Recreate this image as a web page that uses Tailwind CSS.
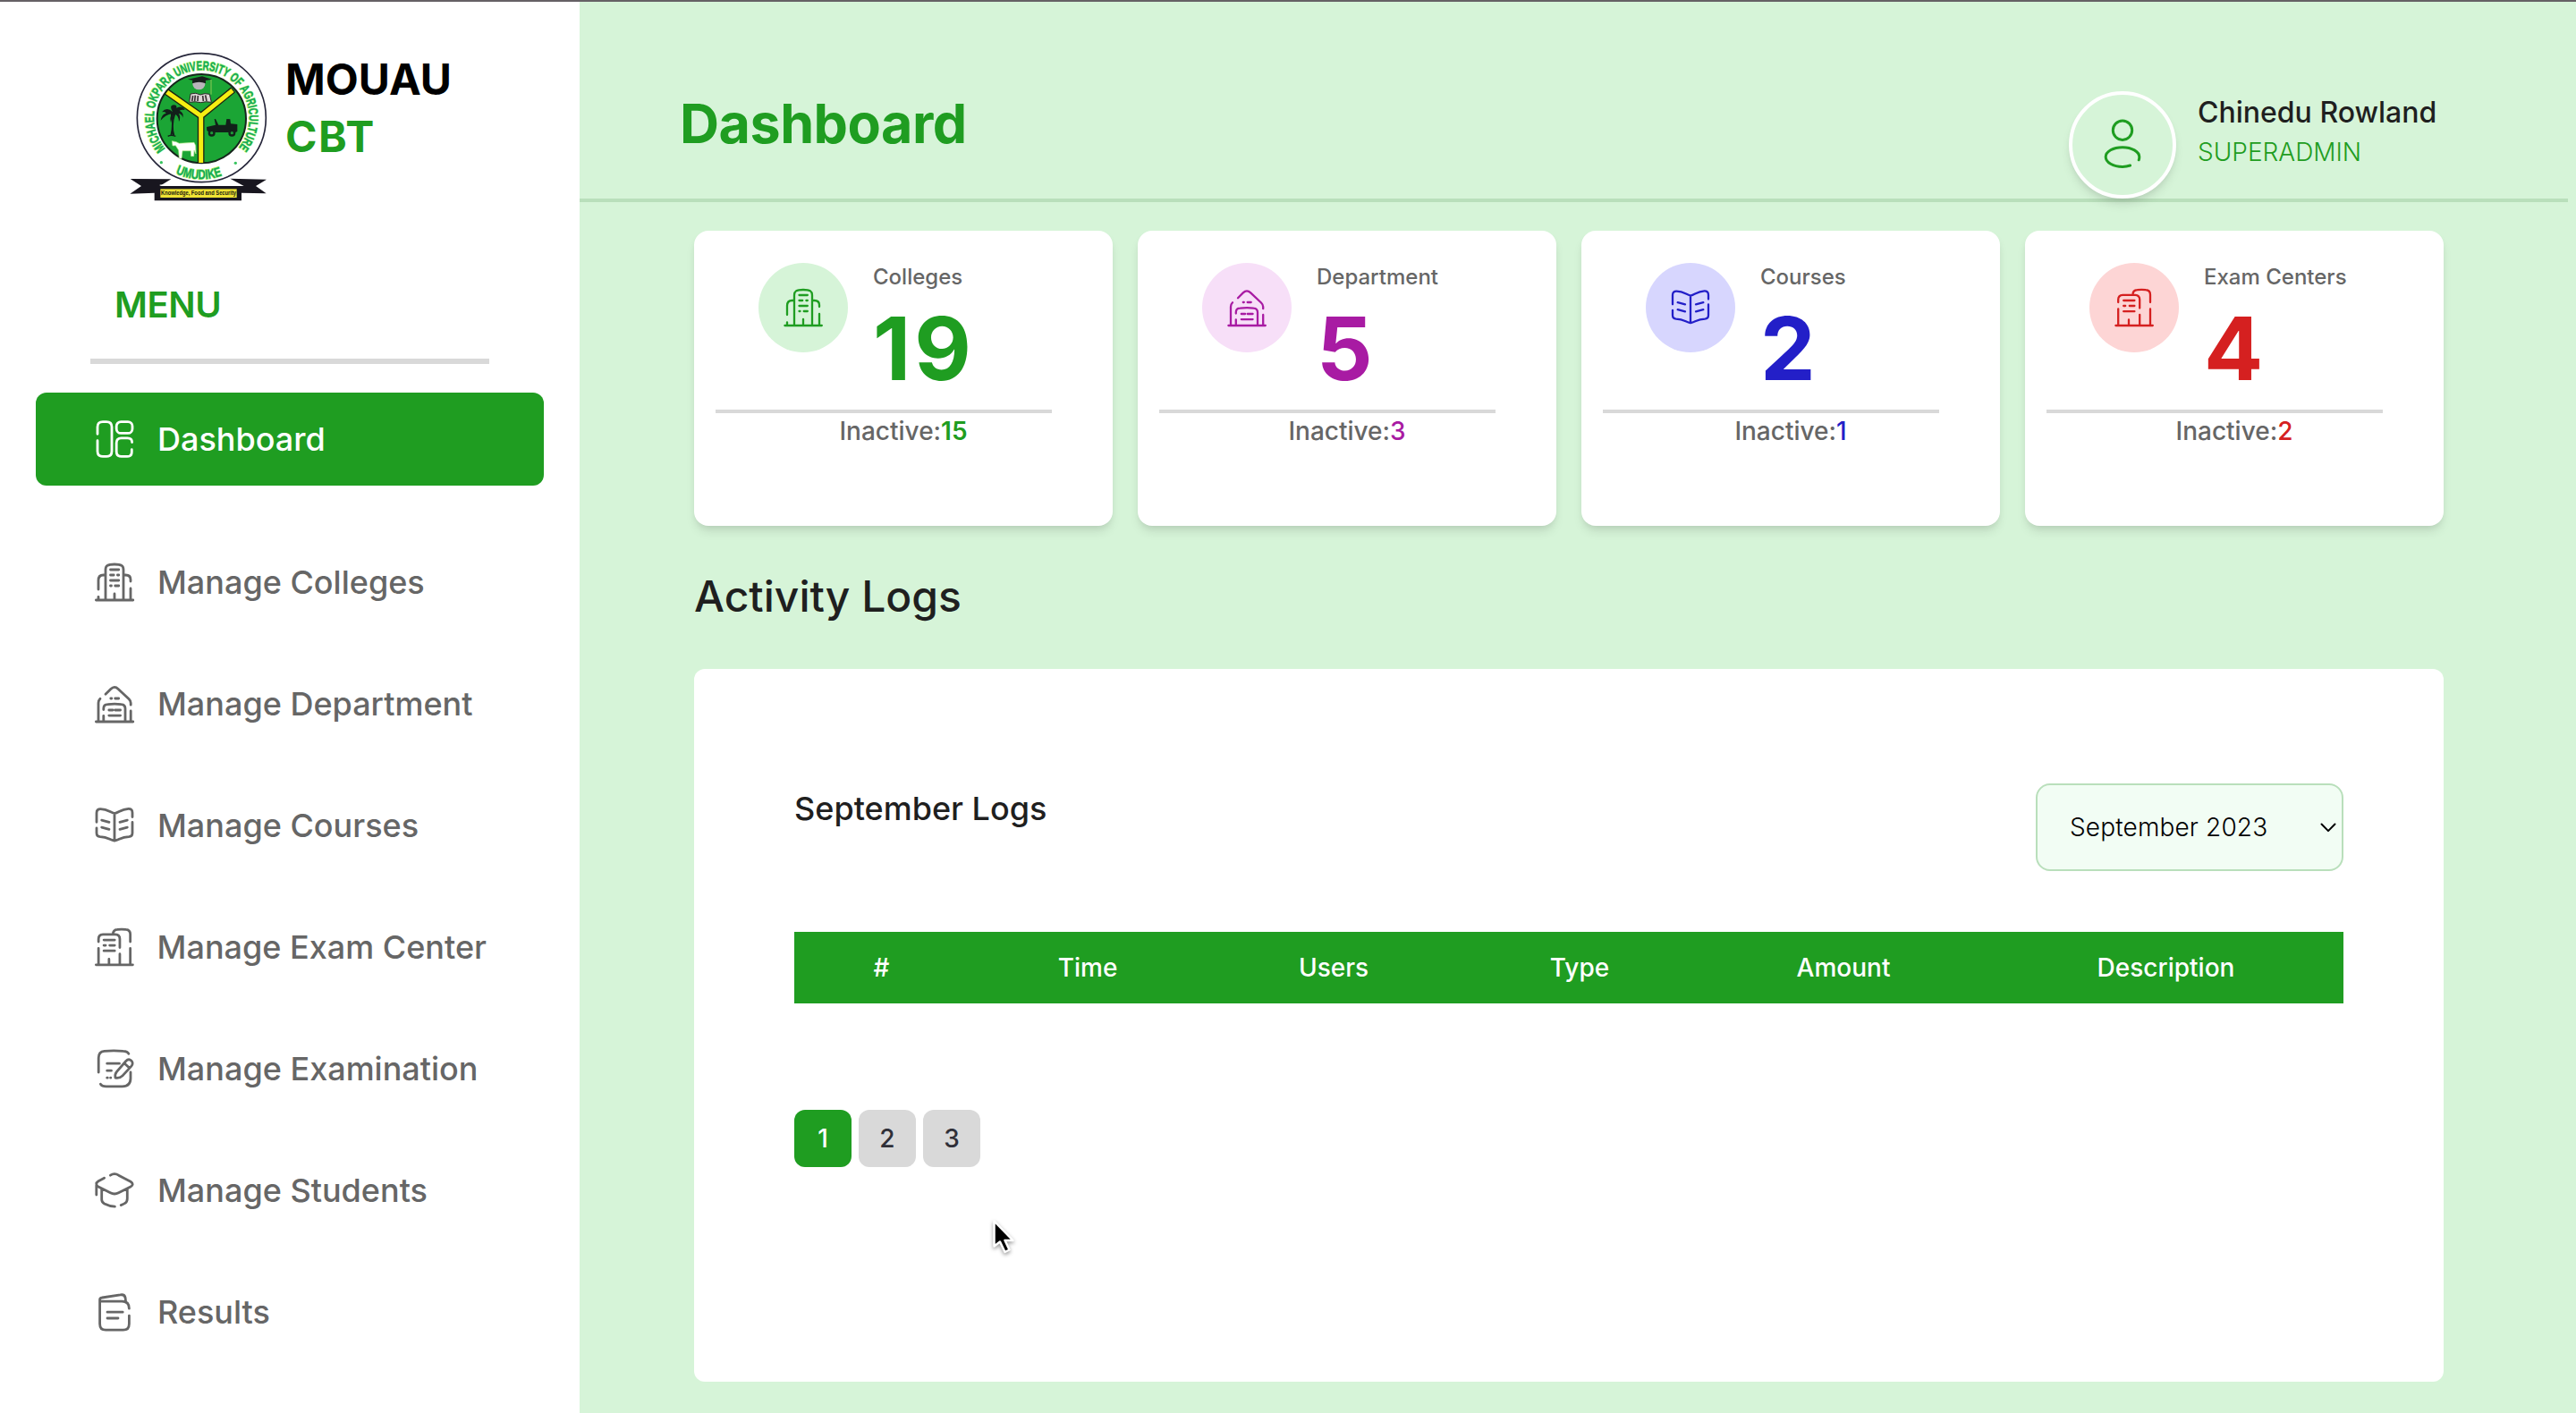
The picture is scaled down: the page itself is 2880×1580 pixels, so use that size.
<!DOCTYPE html>
<html lang="en">
<head>
<meta charset="utf-8">
<title>MOUAU CBT - Dashboard</title>
<script src="https://cdn.jsdelivr.net/npm/@tailwindcss/browser@4"></script>
</head>
<body class="font-['Inter',sans-serif] bg-white">
<!-- icon sprite -->
<svg class="hidden" xmlns="http://www.w3.org/2000/svg">
  <symbol id="i-dashboard" viewBox="0 0 48 48"><path d="M5 18.3V10.5C5 6.3 7 4.6 11 4.6h4c4 0 6 1.700 6 5.900v27c0 4.200-2 5.900-6 5.900h-4c-4 0-6-1.700-6-5.900V25.700"/><rect x="26.200" y="4.600" width="17.800" height="12.800" rx="5"/><path d="M43.600 27.600c0-3.400-1.800-4.700-5-4.700h-7c-3.600 0-5.400 1.700-5.400 5.400v9.800c0 3.600 1.800 5.300 5.400 5.300h6.600c3.500 0 5.100-1.600 5.100-5v-2.700"/></symbol>
  <symbol id="i-college" viewBox="0 0 48 48"><path d="M3.400 44h41.400M14 44V10c0-4.300 2-6 10-6s10 1.700 10 6v34M6 32V22c0-4 2-6 5.500-6H14M6 40.300V44M34 16h2.500c3.500 0 5.500 1.700 5.500 5v2M42 31v13M19.500 10h9.300M19.500 16h3.700M27.400 16h1.400M19.500 22h9.300M19.500 28h1M24.700 28h4.100M24 37v7"/></symbol>
  <symbol id="i-department" viewBox="0 0 48 48"><path d="M3.400 44h41.400M14 13.200l5.800-5.800c2.800-2.700 5.600-2.700 8.400 0L40 18.500c1.500 1.500 2.200 2.700 2.200 4.500v2.200M42.200 32v12M8 18.200C6.500 19.700 6 21 6 23v21M11.800 30.500v-1.300c0-3 1.700-4.600 4.600-4.600 5-.6 10.600-.6 15.200 0 2.900.2 4.400 1.700 4.400 4.700V44M11.800 37.300V44M19.800 18h1M24.700 18h4M17.800 31h4.300M24.700 31h5.900M17.800 37.100h12.800"/></symbol>
  <symbol id="i-course" viewBox="0 0 48 48"><path d="M4 20.300V10c0-3 1.700-4.500 4.500-4.400C16.500 5.800 19 9.400 24 10.600 29 9.400 31.500 5.800 39.500 5.300c2.800-.1 4.500 1.300 4.500 4.400v4.800M44 20.500v12c0 2.300-1.500 3.900-4 4.100C31.500 37 29.500 40 24 41.200 18.500 40 16.500 37 8 36.600c-2.500-.2-4-1.800-4-4.100v-5.700M24 10.600v30.600M9.700 18.200l8.300 2.100M9.700 26.200l8.300 2.100M38.300 18.200L30 20.300M38.300 26.200L30 28.300"/></symbol>
  <symbol id="i-exam" viewBox="0 0 48 48"><path d="M3.400 44h41.400M6.200 18v-3c0-3.400 1.500-5 5-5.200h14c3.400.2 5 1.800 5 5.200v9.500M6.200 25.300V44M30.200 31.800V44M18 37.500V44M22.500 9.500C22.500 6 24 4.500 27.500 4.200c3-.4 6.500-.4 9.500 0 3.500.3 5 1.800 5 5.300v8.500M42 25.500V44M12.200 16h12.200M12.200 22h2M18.800 22h5.600M12.200 28.200h12.200"/></symbol>
  <symbol id="i-examination" viewBox="0 0 48 48"><path d="M6.200 28V12c0-4.500 2-7.200 6.500-7.600 7-.7 14-.7 21 0 3.400.2 5.200.9 6.200 2.900M8.400 41.200c1.200 2 3.300 2.600 6.400 2.600h18c6 0 9.200-2.800 9.200-9v-7M15.700 18.200h13.800M15.700 26.200h4.800M15.700 34.200h.6M19.600 34.200h.2M25 34.200c-.7-3-.1-5 1.500-6.900L36.800 15.500c1.900-2 4.300-2 6-.5s1.900 4.200.1 6.100L33 31.900c-2 2.100-5 2.800-8 2.300zM34.800 17.800l6 5.500"/></symbol>
  <symbol id="i-student" viewBox="0 0 48 48"><path d="M19.400 7.200c3-2 6.200-2 9.200 0L42 14.300c3 1.900 3 3.900 0 5.700L28.600 26.800c-3 1.600-6.200 1.600-9.200 0L6 20c-3-1.800-3-4.400 0-6.300l6.600-3.500M3.800 18v11M9.700 22.500v11.700c0 2.500.7 3.500 3 4.800 4 2 7.500 3 11.700 3.200M38.300 22.500v10.700c0 2.500-.5 3.800-2.500 5.200-1.300.9-2.800 1.500-4.600 2.200"/></symbol>
  <symbol id="i-result" viewBox="0 0 48 48"><path d="M7.600 10v27.200c0 4.800 2 7 6.600 7h19.500c4.600 0 6.700-2.200 6.700-7v-9M7.600 12.200h24.800c5 0 8 2.800 8 8M7.600 12V10.500c0-1.700.8-2.300 2.500-2.500l20.400-3.100c3.200-.6 5 .3 5.600 3.200l.6 5.300M16 24.200h17.200M16 31h12"/></symbol>
</svg>

<div class="w-[2880px] h-[1580px] flex flex-col overflow-hidden">
  <div class="h-[2px] bg-[#666165] shrink-0"></div>
  <div class="flex flex-1 min-h-0">

    <!-- sidebar -->
    <aside class="w-[648px] shrink-0 bg-white flex flex-col">
      <div class="flex pl-[130px] pt-[43px] h-[315px]">
        <svg class="w-[187px] h-[190px] shrink-0" viewBox="0 0 561 570" xmlns="http://www.w3.org/2000/svg">
          <defs>
            <path id="arcTop" d="M164.300 363.900A160 160 0 1 1 407.700 363.900"/>
            <path id="arcBottom" d="M199 447A206 206 0 0 0 362 451"/>
          </defs>
          <circle cx="286" cy="260" r="216" fill="#fff" stroke="#26263a" stroke-width="5"/>
          <circle cx="286" cy="263" r="149" fill="#1ba535" stroke="#16261c" stroke-width="6"/>
          <path d="M168 172L284 254L392 166M284 250V412" fill="none" stroke="#1d2410" stroke-width="23"/>
          <path d="M170 174L284 254L390 168M284 250V411" fill="none" stroke="#f6ee12" stroke-width="15"/>
          <!-- mortarboard, globe and book -->
          <ellipse cx="277" cy="147" rx="21" ry="19" fill="#b9b4bb"/>
          <path d="M240 131l48-10 33 10-43 8z" fill="#181e1c"/><path d="M255 136q22-9 45 0v9q-22-9-45 0z" fill="#181e1c"/>
          <path d="M318 132v50" stroke="#8ecb56" stroke-width="3"/>
          <path d="M249 180q18-6 33 3 15-7 31-2l6 27q-18-4-36 1-18-5-38-1z" fill="#ddd6d6" stroke="#2b2526" stroke-width="3"/>
          <path d="M257 186l-3 18M265 185l-2 19M274 186l-1 18M290 186l2 18M299 184l4 20" stroke="#3b3335" stroke-width="5"/>
          <!-- palm tree -->
          <path d="M185 244c6 28 6 50-1 76M196 246c-8 24-11 48-3 74" fill="none" stroke="#12201a" stroke-width="6"/>
          <path d="M189 240q-20-18-36 1 12-3 14 4-14 2-18 24 16-19 38-23-9 12-4 30 4-19 12-28 14 2 15 25 8-15-1-27 12 2 14 14 5-17-11-24 6-4 18-2-8-16-28-7 2-10-10-10-16 2-3 23z" fill="#12201a"/>
          <path d="M173 322q10-6 26 0" stroke="#12201a" stroke-width="4" fill="none"/>
          <!-- cow -->
          <path d="M187 338l14 3 10 5 50-3 5 10 1 28-6-12-1 20-9 0-1-18-28 0-3 26-8-1-2-27-10-16-10 1z" fill="#fff" stroke="#b6ee8e" stroke-width="2"/>
          <!-- jeep -->
          <path d="M303 291l30-7-4-20h4l10 20 24 0 3-20 12 1 2 15 22 2v24l-6 3H312l-8-6z" fill="#12201a"/>
          <circle cx="320" cy="311" r="12" fill="#12201a"/><circle cx="388" cy="311" r="12" fill="#12201a"/>
          <circle cx="320" cy="311" r="5" fill="#1e9a38"/><circle cx="388" cy="311" r="5" fill="#1e9a38"/>
          <g font-family="'Liberation Sans',sans-serif" font-weight="700" fill="#12a85c" stroke="#9cf05a" stroke-width="4" paint-order="stroke">
            <text font-size="43"><textPath href="#arcTop" textLength="724" lengthAdjust="spacingAndGlyphs">MICHAEL OKPARA UNIVERSITY OF AGRICULTURE</textPath></text>
            <text font-size="45"><textPath href="#arcBottom" textLength="160" lengthAdjust="spacingAndGlyphs">UMUDIKE</textPath></text>
          </g>
          <circle cx="151" cy="410" r="5" fill="#36c45e"/><circle cx="400" cy="412" r="5" fill="#36c45e"/>
          <!-- ribbon -->
          <path d="M47 465L184 466L146 489H428L382 464L504 467L468 489L503 514L420 512V538H128V512L46 515L84 489z" fill="#18161f"/>
          <path d="M146 486h256" stroke="#fff" stroke-width="3"/>
          <rect x="148" y="499" width="256" height="29" fill="#efe334"/>
          <text x="150" y="519" font-family="'Liberation Sans',sans-serif" font-weight="700" font-size="19" textLength="252" lengthAdjust="spacingAndGlyphs" fill="#1c1a10">Knowledge, Food and Security</text>
        </svg>
        <div class="pt-[12px] pl-[2px] text-[48px] leading-[64px] font-bold text-black">
          <div>MOUAU</div>
          <div class="tracking-[1.4px] text-[#1f9d21]">CBT</div>
        </div>
      </div>
      <div class="pl-[128px] text-[40px] leading-[48px] font-semibold tracking-[-0.4px] text-[#1f9d21]">MENU</div>
      <div class="mt-[36px] ml-[101px] w-[446px] h-[6px] bg-[#d9d9d9]"></div>

      <nav class="mt-[32px] px-[40px] flex flex-col text-[36px] leading-[48px] font-medium text-[#666]">
        <a class="flex items-center gap-[24px] h-[104px] px-[64px] rounded-[12px] bg-[#1f9d21] text-white mb-[56px]"><svg class="w-[48px] h-[48px] fill-none stroke-current stroke-[2.8] [stroke-linecap:round] [stroke-linejoin:round]"><use href="#i-dashboard"/></svg>Dashboard</a>
        <a class="flex items-center gap-[24px] h-[104px] px-[64px] mb-[32px]"><svg class="w-[48px] h-[48px] fill-none stroke-current stroke-[2.8] [stroke-linecap:round] [stroke-linejoin:round]"><use href="#i-college"/></svg>Manage Colleges</a>
        <a class="flex items-center gap-[24px] h-[104px] px-[64px] mb-[32px]"><svg class="w-[48px] h-[48px] fill-none stroke-current stroke-[2.8] [stroke-linecap:round] [stroke-linejoin:round]"><use href="#i-department"/></svg>Manage Department</a>
        <a class="flex items-center gap-[24px] h-[104px] px-[64px] mb-[32px]"><svg class="w-[48px] h-[48px] fill-none stroke-current stroke-[2.8] [stroke-linecap:round] [stroke-linejoin:round]"><use href="#i-course"/></svg>Manage Courses</a>
        <a class="flex items-center gap-[24px] h-[104px] px-[64px] mb-[32px] whitespace-nowrap"><svg class="w-[48px] h-[48px] fill-none stroke-current stroke-[2.8] [stroke-linecap:round] [stroke-linejoin:round]"><use href="#i-exam"/></svg>Manage Exam Center</a>
        <a class="flex items-center gap-[24px] h-[104px] px-[64px] mb-[32px]"><svg class="w-[48px] h-[48px] fill-none stroke-current stroke-[2.8] [stroke-linecap:round] [stroke-linejoin:round]"><use href="#i-examination"/></svg>Manage Examination</a>
        <a class="flex items-center gap-[24px] h-[104px] px-[64px] mb-[32px]"><svg class="w-[48px] h-[48px] fill-none stroke-current stroke-[2.8] [stroke-linecap:round] [stroke-linejoin:round]"><use href="#i-student"/></svg>Manage Students</a>
        <a class="flex items-center gap-[24px] h-[104px] px-[64px]"><svg class="w-[48px] h-[48px] fill-none stroke-current stroke-[2.8] [stroke-linecap:round] [stroke-linejoin:round]"><use href="#i-result"/></svg>Results</a>
      </nav>
    </aside>

    <!-- main -->
    <main class="flex-1 bg-[#d6f4d8] flex flex-col">
      <header class="w-[2223px] h-[224px] border-b-[4px] border-[#b9dfbb] flex justify-between pl-[112px] pr-[148px]">
        <h1 class="pt-[96px] text-[61px] leading-[80px] font-bold tracking-[-0.5px] text-[#1f9d21]">Dashboard</h1>
        <div class="flex pt-[100px] w-[410px]">
          <div class="w-[120px] h-[120px] shrink-0 rounded-full border-[4px] border-white bg-[#d6f4d8] shadow-[0_8px_12px_-2px_rgba(0,0,0,0.1),0_4px_8px_-4px_rgba(0,0,0,0.1)] flex items-center justify-center">
            <svg class="w-[60px] h-[60px] fill-none stroke-[#1f9d21] stroke-3 [stroke-linecap:round]" viewBox="0 0 60 60"><circle cx="30" cy="13.700" r="10.700"/><path d="M38.600 53a26 26 0 0 1-8.600 1.400c-10.400 0-18.800-4.800-18.800-10.900S19.600 32.700 30 32.700s18.800 4.800 18.800 10.900c0 1.200-.2 2.300-.6 3.200"/></svg>
          </div>
          <div class="pl-[24px] pt-[8px] whitespace-nowrap">
            <div class="text-[32px] leading-[32px] font-medium text-[#1f1f1f]">Chinedu Rowland</div>
            <div class="mt-[8px] text-[28px] leading-[40px] font-light text-[#1f9d21]">SUPERADMIN</div>
          </div>
        </div>
      </header>

      <section class="mt-[32px] ml-[128px] w-[1956px] grid grid-cols-4 gap-[28px]">
        <article class="h-[330px] bg-white rounded-[16px] shadow-[0_8px_12px_-2px_rgba(0,0,0,0.1),0_4px_8px_-4px_rgba(0,0,0,0.1)] pt-[36px]">
          <div class="flex gap-[28px] pl-[72px] h-[164px]">
            <div class="w-[100px] h-[100px] rounded-full bg-[#d6f4d8] text-[#1f9d21] flex items-center justify-center"><svg class="w-[48px] h-[48px] fill-none stroke-current stroke-[2.3] [stroke-linecap:round] [stroke-linejoin:round]"><use href="#i-college"/></svg></div>
            <div><div class="text-[24px] leading-[32px] font-medium text-[#666]">Colleges</div><div class="mt-[16px] text-[98px] leading-[96px] font-bold tracking-[4px] text-[#1f9d21]">19</div></div>
          </div>
          <div class="ml-[24px] w-[376px] h-[4px] bg-[#d9d9d9]"></div>
          <div class="text-center text-[28px] leading-[40px] font-medium text-[#666]">Inactive:<span class="font-semibold text-[#1f9d21]">15</span></div>
        </article>
        <article class="h-[330px] bg-white rounded-[16px] shadow-[0_8px_12px_-2px_rgba(0,0,0,0.1),0_4px_8px_-4px_rgba(0,0,0,0.1)] pt-[36px]">
          <div class="flex gap-[28px] pl-[72px] h-[164px]">
            <div class="w-[100px] h-[100px] rounded-full bg-[#f7dff8] text-[#a81ba3] flex items-center justify-center"><svg class="w-[48px] h-[48px] fill-none stroke-current stroke-[2.3] [stroke-linecap:round] [stroke-linejoin:round]"><use href="#i-department"/></svg></div>
            <div><div class="text-[24px] leading-[32px] font-medium text-[#666]">Department</div><div class="mt-[16px] text-[98px] leading-[96px] font-bold text-[#a81ba3]">5</div></div>
          </div>
          <div class="ml-[24px] w-[376px] h-[4px] bg-[#d9d9d9]"></div>
          <div class="text-center text-[28px] leading-[40px] font-medium text-[#666]">Inactive:<span class="text-[#a81ba3]">3</span></div>
        </article>
        <article class="h-[330px] bg-white rounded-[16px] shadow-[0_8px_12px_-2px_rgba(0,0,0,0.1),0_4px_8px_-4px_rgba(0,0,0,0.1)] pt-[36px]">
          <div class="flex gap-[28px] pl-[72px] h-[164px]">
            <div class="w-[100px] h-[100px] rounded-full bg-[#d7d6fe] text-[#231fc8] flex items-center justify-center"><svg class="w-[48px] h-[48px] fill-none stroke-current stroke-[2.3] [stroke-linecap:round] [stroke-linejoin:round]"><use href="#i-course"/></svg></div>
            <div><div class="text-[24px] leading-[32px] font-medium text-[#666]">Courses</div><div class="mt-[16px] text-[98px] leading-[96px] font-bold text-[#231fc8]">2</div></div>
          </div>
          <div class="ml-[24px] w-[376px] h-[4px] bg-[#d9d9d9]"></div>
          <div class="text-center text-[28px] leading-[40px] font-medium text-[#666]">Inactive:<span class="text-[#231fc8]">1</span></div>
        </article>
        <article class="h-[330px] bg-white rounded-[16px] shadow-[0_8px_12px_-2px_rgba(0,0,0,0.1),0_4px_8px_-4px_rgba(0,0,0,0.1)] pt-[36px]">
          <div class="flex gap-[28px] pl-[72px] h-[164px]">
            <div class="w-[100px] h-[100px] rounded-full bg-[#fdd5d5] text-[#d52020] flex items-center justify-center"><svg class="w-[48px] h-[48px] fill-none stroke-current stroke-[2.3] [stroke-linecap:round] [stroke-linejoin:round]"><use href="#i-exam"/></svg></div>
            <div><div class="text-[24px] leading-[32px] font-medium text-[#666]">Exam Centers</div><div class="mt-[16px] text-[98px] leading-[96px] font-bold text-[#d52020]">4</div></div>
          </div>
          <div class="ml-[24px] w-[376px] h-[4px] bg-[#d9d9d9]"></div>
          <div class="text-center text-[28px] leading-[40px] font-medium text-[#666]">Inactive:<span class="text-[#d52020]">2</span></div>
        </article>
      </section>

      <h2 class="mt-[47px] ml-[128px] text-[48px] leading-[64px] font-medium text-[#1f1f1f]">Activity Logs</h2>

      <section class="mt-[49px] ml-[128px] w-[1956px] h-[797px] bg-white rounded-[12px] px-[112px] pt-[128px]">
        <div class="flex justify-between h-[166px]">
          <h3 class="pt-[4px] text-[36px] leading-[48px] font-medium text-[#1f1f1f]">September Logs</h3>
          <div class="w-[344px] h-[98px] rounded-[16px] border-2 border-[#b9dfbb] bg-[#f2fdf4] flex items-center justify-between pl-[36px] pr-[5px] text-[28px] text-black">
            <span class="font-light tracking-[0.15px]">September 2023</span>
            <svg class="w-[20px] h-[14px] fill-none stroke-black stroke-2 [stroke-linecap:round] [stroke-linejoin:round]" viewBox="0 0 20 14"><path d="M2.500 3.500l7.500 7.600L17.500 3.500"/></svg>
          </div>
        </div>
        <table class="w-[1732px] h-[80px] table-fixed border-collapse bg-[#1f9d21] text-white text-[28px] leading-[40px]">
          <colgroup><col class="w-[195px]"><col class="w-[266px]"><col class="w-[284px]"><col class="w-[266px]"><col class="w-[324px]"><col class="w-[397px]"></colgroup>
          <thead><tr><th class="p-0 font-medium">#</th><th class="p-0 font-medium">Time</th><th class="p-0 font-medium">Users</th><th class="p-0 font-medium">Type</th><th class="p-0 font-medium">Amount</th><th class="p-0 font-medium">Description</th></tr></thead>
        </table>
        <div class="mt-[119px] flex gap-[8px] text-[28px] font-medium text-[#303038]">
          <div class="w-[64px] h-[64px] rounded-[12px] bg-[#1f9d21] text-white flex items-center justify-center">1</div>
          <div class="w-[64px] h-[64px] rounded-[12px] bg-[#d9d9d9] flex items-center justify-center">2</div>
          <div class="w-[64px] h-[64px] rounded-[12px] bg-[#d9d9d9] flex items-center justify-center">3</div>
        </div>
      </section>
    </main>
  </div>
</div>

<!-- mouse pointer -->
<svg class="absolute left-[1106px] top-[1360px] w-[34px] h-[48px] drop-shadow-[0_2px_2px_rgba(0,0,0,0.4)]" viewBox="0 0 34 48"><path d="M5.500 5.500V33.500L12 28.500L17.500 40L22.500 37.500L17.500 27H26.500z" fill="#000" stroke="#fff" stroke-width="2.500" stroke-linejoin="round"/></svg>
</body>
</html>
